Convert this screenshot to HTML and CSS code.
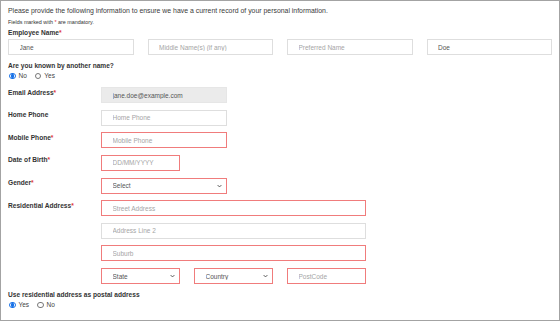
FILE: index.html
```html
<!DOCTYPE html>
<html lang="en">
<head>
<meta charset="utf-8">
<title>Personal Information</title>
<link rel="stylesheet" href="styles.css">
</head>
<body>
<div class="frame">
  <p class="intro">Please provide the following information to ensure we have a current record of your personal information.</p>
  <p class="note">Fields marked with <span class="req">*</span> are mandatory.</p>

  <div class="lbl top-lbl">Employee Name<span class="req">*</span></div>
  <div class="name-grid">
    <input class="in" value="Jane">
    <input class="in" placeholder="Middle Name(s) (if any)">
    <input class="in" placeholder="Preferred Name">
    <input class="in" value="Doe">
  </div>

  <div class="lbl q-lbl">Are you known by another name?</div>
  <div class="radios">
    <label class="opt"><input type="radio" name="alias" checked> No</label>
    <label class="opt"><input type="radio" name="alias"> Yes</label>
  </div>

  <div class="form-grid">
    <div class="lbl row-lbl">Email Address<span class="req">*</span></div>
    <input class="in c3 disabled" value="jane.doe@example.com" disabled>

    <div class="lbl row-lbl">Home Phone</div>
    <input class="in c3" placeholder="Home Phone">

    <div class="lbl row-lbl">Mobile Phone<span class="req">*</span></div>
    <input class="in c3 err" placeholder="Mobile Phone">

    <div class="lbl row-lbl">Date of Birth<span class="req">*</span></div>
    <input class="in c2 err" placeholder="DD/MM/YYYY">

    <div class="lbl row-lbl">Gender<span class="req">*</span></div>
    <div class="sel c3">
      <select class="in err"><option>Select</option></select>
      <svg class="chev" viewBox="0 0 8 5" width="5" height="4"><path d="M1 1 L4 4 L7 1" fill="none" stroke="#444" stroke-width="1.4"/></svg>
    </div>

    <div class="lbl row-lbl">Residential Address<span class="req">*</span></div>
    <input class="in c6 err" placeholder="Street Address">

    <input class="in wide-indent" placeholder="Address Line 2">
    <input class="in wide-indent err" placeholder="Suburb">

    <div class="sel col-state">
      <select class="in err"><option>State</option></select>
      <svg class="chev" viewBox="0 0 8 5" width="5" height="4"><path d="M1 1 L4 4 L7 1" fill="none" stroke="#444" stroke-width="1.4"/></svg>
    </div>
    <div class="sel col-country">
      <select class="in err"><option>Country</option></select>
      <svg class="chev" viewBox="0 0 8 5" width="5" height="4"><path d="M1 1 L4 4 L7 1" fill="none" stroke="#444" stroke-width="1.4"/></svg>
    </div>
    <input class="in col-post err" placeholder="PostCode">
  </div>

  <div class="lbl post-lbl">Use residential address as postal address</div>
  <div class="radios">
    <label class="opt"><input type="radio" name="postal" checked> Yes</label>
    <label class="opt"><input type="radio" name="postal"> No</label>
  </div>
</div>
</body>
</html>
```

FILE: styles.css
```css
* { box-sizing: border-box; }
html, body { margin: 0; padding: 0; background: #fff; }
body {
  font-family: "Liberation Sans", Arial, sans-serif;
  color: #333;
}
.frame {
  width: 560px;
  height: 321px;
  border: 1px solid #a3a3a3;
  padding: 6px 7px 0 7px;
  overflow: hidden;
}
.intro {
  margin: 0;
  font-size: 6.9px;
  line-height: 8px;
  color: #3a3a3a;
}
.note {
  margin: 3px 0 0 0;
  font-size: 5.4px;
  line-height: 8px;
  color: #333;
}
.req { color: #e0373b; }
.lbl {
  font-weight: bold;
  font-size: 6.6px;
  line-height: 8px;
  color: #333;
}
.top-lbl { margin-top: 3px; }
.name-grid {
  display: grid;
  grid-template-columns: repeat(4, 1fr);
  column-gap: 14px;
  margin-top: 2px;
}
.in {
  display: block;
  width: 100%;
  height: 16px;
  margin: 0;
  padding: 0 0 0 10.5px;
  border: 1px solid #dedede;
  border-radius: 0;
  background: #fff;
  font-family: "Liberation Sans", Arial, sans-serif;
  font-size: 6.5px;
  color: #555;
  outline: none;
}
.in::placeholder { color: #a5a5a5; }
.in.err { border-color: #f07c7c; }
.in.disabled { background: #ebebeb; border-color: #e6e6e6; color: #555; }
.q-lbl { margin-top: 7px; }
.radios {
  display: flex;
  gap: 7px;
  height: 8px;
  margin-top: 2px;
}
.opt {
  display: flex;
  align-items: center;
  gap: 3px;
  font-size: 6.5px;
  line-height: 8px;
  color: #444;
  padding-left: 1px;
}
.opt input {
  appearance: none;
  -webkit-appearance: none;
  width: 6.5px;
  height: 6.5px;
  margin: 0;
  border: 0.8px solid #777;
  border-radius: 50%;
  background: #fff;
}
.opt input:checked {
  border-color: #1a73e8;
  background: radial-gradient(circle, #1a73e8 0 55%, #fff 60%);
}
.form-grid {
  display: grid;
  grid-template-columns: repeat(12, 1fr);
  column-gap: 14px;
  row-gap: 6.625px;
  margin-top: 7px;
}
.row-lbl { grid-column: 1 / span 2; padding-top: 1.5px; }
.c2 { grid-column: span 2; }
.c3 { grid-column: span 3; }
.c6 { grid-column: span 6; }
.wide-indent { grid-column: 3 / span 6; }
.col-state { grid-column: 3 / span 2; }
.col-country { grid-column: 5 / span 2; }
.col-post { grid-column: 7 / span 2; }
.sel { position: relative; }
.sel select {
  appearance: none;
  -webkit-appearance: none;
  color: #555;
}
.chev {
  position: absolute;
  right: 5px;
  top: 6px;
  pointer-events: none;
}
.post-lbl { margin-top: 7px; }
```
